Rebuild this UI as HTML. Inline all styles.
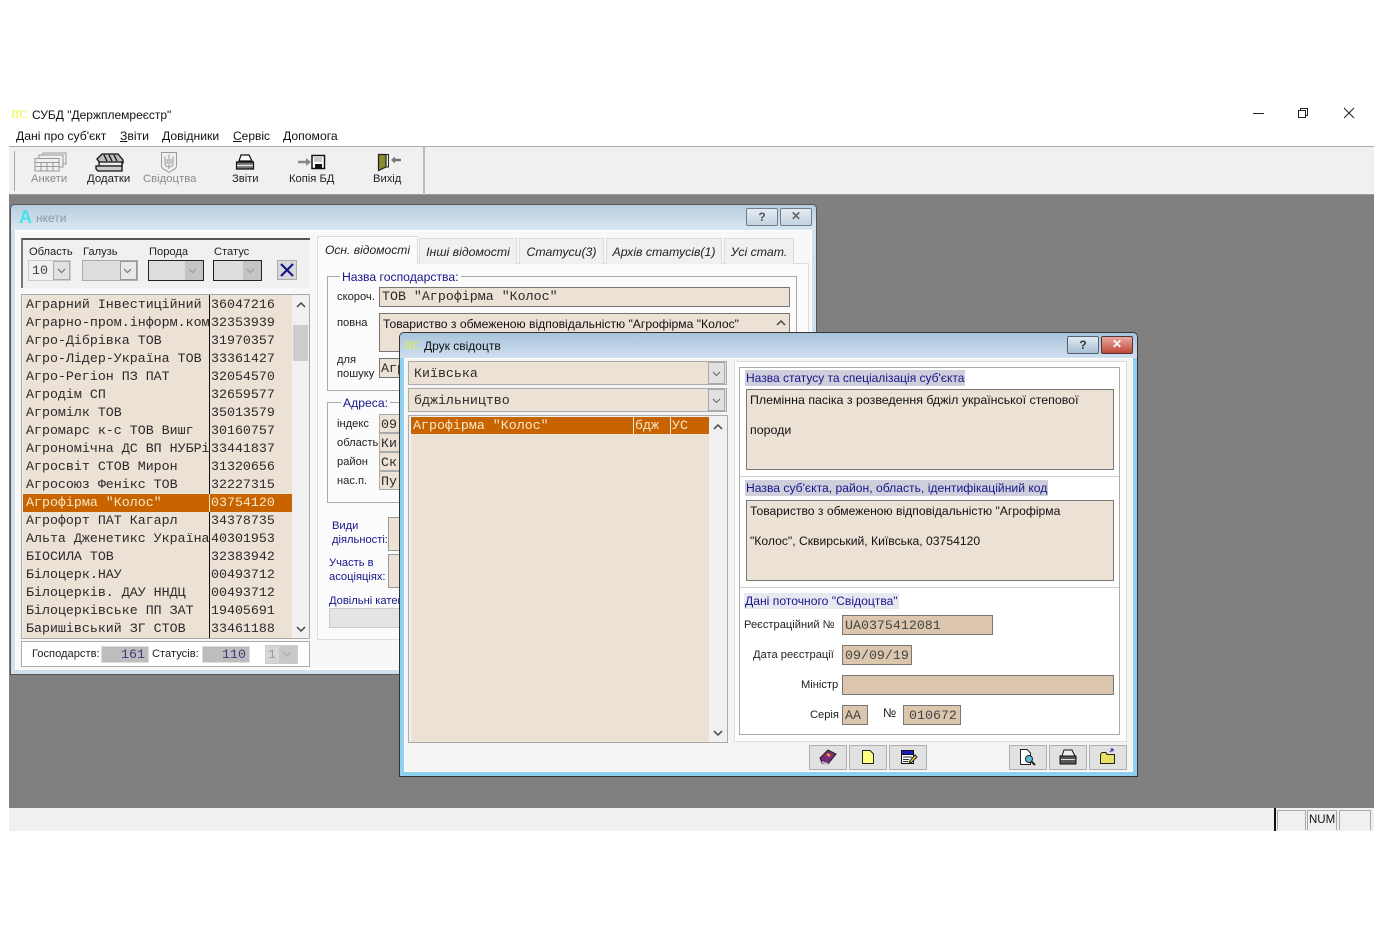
<!DOCTYPE html>
<html><head><meta charset="utf-8">
<style>
html,body{margin:0;padding:0;background:#fff}
#r{position:relative;width:1380px;height:943px;overflow:hidden;background:#fff;font-family:"Liberation Sans",sans-serif;font-size:12px;color:#111}
#r div,#r svg{position:absolute}
.t{white-space:nowrap;line-height:14px}
.s{font-size:11.15px;line-height:13px;white-space:nowrap;color:#222;margin-top:1px}
.m{font-family:"Liberation Mono",monospace;font-size:13.3px;line-height:16px;white-space:nowrap;color:#2a2a2a;margin-top:1px}
.b{color:#16168c}
.f{background:#ebe1d5;border:1px solid #777;box-sizing:border-box}
.tan{background:#dcc7ae;border:1px solid #777;box-sizing:border-box}
.g{border:1px solid #aaa;box-sizing:border-box}
.tab{background:#f0f0f0;border:1px solid #ddd;border-bottom:0;box-sizing:border-box;font-style:italic;text-align:center;line-height:27px;font-size:12.3px;color:#222;white-space:nowrap}
.btn{background:#e1e1e1;border:1px solid #adadad;box-sizing:border-box;width:38px;height:25px}
u{text-decoration:underline}
</style></head><body><div id="r">

<!-- app frame -->
<div style="left:9px;top:146px;width:1365px;height:49px;background:#f0f0f0;border-top:1px solid #aaa;border-bottom:1px solid #999;box-sizing:border-box"></div>
<div style="left:423px;top:146px;width:2px;height:49px;background:#bbb"></div>
<div style="left:14px;top:151px;width:1px;height:40px;background:#aaa"></div>
<div style="left:9px;top:195px;width:1365px;height:613px;background:#808080"></div>
<div style="left:9px;top:808px;width:1365px;height:23px;background:#f0f0f0"></div>

<!-- title -->
<div class="t" style="left:11px;top:107px;font-family:'Liberation Serif',serif;font-size:12px;letter-spacing:-1.5px;color:#f2f240">ΙΤC</div>
<div class="t" style="left:32px;top:108px;font-size:12px">СУБД "Держплемреєстр"</div>
<div class="t" style="left:16px;top:129px;font-size:12.2px"><u>Д</u>ані про суб'єкт</div>
<div class="t" style="left:120px;top:129px;font-size:12.2px"><u>З</u>віти</div>
<div class="t" style="left:162px;top:129px;font-size:12.2px"><u>Д</u>овідники</div>
<div class="t" style="left:233px;top:129px;font-size:12px"><u>С</u>ервіс</div>
<div class="t" style="left:283px;top:129px;font-size:12.2px"><u>Д</u>опомога</div>

<!-- window controls -->
<svg style="left:1250px;top:105px" width="110" height="16" fill="none" stroke="#222" stroke-width="1">
<path d="M3 8.500H14"/>
<rect x="48.500" y="5.500" width="7" height="7"/><path d="M50.500 5.500V3.500H57.500V10.500H55.500"/>
<path d="M94 3L104 13M104 3L94 13"/>
</svg>

<!-- toolbar -->
<svg style="left:30px;top:152px" width="40" height="20" fill="none" stroke="#999" stroke-width="1">
<path d="M5 6.500H29V19H5ZM5 10.500H29M5 14.500H29M11 10V19M17 10V19M23 10V19M9 6V3H33V15H29M13 3V1H36V12H33"/>
</svg>
<svg style="left:95px;top:153px" width="30" height="20" fill="none" stroke="#111" stroke-width="1.300">
<path fill="#bbb" d="M2 6L7 1H23L28 7V10H5Z"/><path d="M9 2L12 8M14 2L17 8M19 2L22 8"/>
<path fill="#eee" d="M4 9H27V13H4Z"/><path fill="#ccc" d="M1 13H27V18H3L1 16Z"/>
</svg>
<svg style="left:159px;top:152px" width="20" height="22" fill="none" stroke="#9a9a9a" stroke-width="1">
<path d="M2.500 .5H17.500V14C17.500 17 13 18 10 20.500C7 18 2.500 17 2.500 14Z"/><path d="M10 2.500V17M6 4.500V12C6 14.500 8 14.500 10 15C12 14.500 14 14.500 14 12V4.500M8 7V12M12 7V12"/>
</svg>
<svg style="left:235px;top:154px" width="20" height="17" fill="none" stroke="#111" stroke-width="1.200">
<path fill="#fff" d="M6 1H14L17 7H4Z"/><path fill="#777" d="M1.500 8H18.500V15H1.500Z"/><path d="M2 11.500H18" stroke="#eee"/>
</svg>
<svg style="left:297px;top:154px" width="30" height="16" fill="none">
<path d="M1 8H10" stroke="#888" stroke-width="2.500"/><path d="M9 4L14 8L9 12Z" fill="#888"/>
<rect x="15" y="1.500" width="12.500" height="13" fill="#fff" stroke="#111" stroke-width="1.500"/><rect x="17" y="2" width="8" height="6" fill="#ccc"/><rect x="18" y="10" width="7" height="4" fill="#111"/>
</svg>
<svg style="left:377px;top:153px" width="26" height="20" fill="none">
<path d="M1.500 1.500H9V14L1.500 17.500Z" fill="#8b8b2c" stroke="#222" stroke-width="1.200"/><path d="M9 1.500H11.500V14H9" stroke="#222"/>
<path d="M14 7L18 3.500V10.500Z" fill="#777"/><path d="M17 7H24" stroke="#777" stroke-width="2.500"/>
</svg>
<div class="s" style="left:31px;top:172px;color:#8a8a8a;font-size:11.3px">Анкети</div>
<div class="s" style="left:87px;top:172px;font-size:11.4px">Додатки</div>
<div class="s" style="left:143px;top:172px;color:#8a8a8a;font-size:11.3px">Свідоцтва</div>
<div class="s" style="left:232px;top:172px;font-size:11.2px">Звіти</div>
<div class="s" style="left:289px;top:172px;font-size:11.2px">Копія БД</div>
<div class="s" style="left:373px;top:172px;font-size:11.2px">Вихід</div>

<!-- status -->
<div style="left:1274px;top:808px;width:2px;height:23px;background:#111"></div>
<div style="left:1277px;top:810px;width:29px;height:20px;border:1px solid #aaa;border-bottom:0;box-sizing:border-box"></div>
<div style="left:1307px;top:810px;width:30px;height:20px;border:1px solid #aaa;border-bottom:0;box-sizing:border-box"></div>
<div class="t" style="left:1309px;top:813px;font-size:11.5px">NUM</div>
<div style="left:1339px;top:810px;width:32px;height:20px;border:1px solid #aaa;border-bottom:0;box-sizing:border-box"></div>

<!-- Анкети window -->
<div style="left:10px;top:204px;width:807px;height:471px;background:#cfe0ee;border:1px solid #555;border-radius:5px 5px 0 0;box-sizing:border-box"></div>
<div style="left:11px;top:205px;width:805px;height:25px;background:linear-gradient(#b8cde0,#d9e6f1);border-radius:4px 4px 0 0"></div>
<div class="t" style="left:19px;top:210px;font-size:18px;font-weight:bold;color:#3fe5e5">A</div>
<div class="t" style="left:36px;top:211px;color:#8d9aa5;font-size:12px">нкети</div>
<div style="left:746px;top:208px;width:32px;height:18px;background:linear-gradient(#e4ecf3,#c4d3e0);border:1px solid #6f7f8d;border-radius:2px;box-sizing:border-box;text-align:center;line-height:16px;font-weight:bold;color:#555;font-size:12px">?</div>
<div style="left:780px;top:208px;width:32px;height:18px;background:linear-gradient(#e4ecf3,#c4d3e0);border:1px solid #6f7f8d;border-radius:2px;box-sizing:border-box;text-align:center;line-height:15px;font-weight:bold;color:#666;font-size:12px">✕</div>
<div style="left:15px;top:230px;width:797px;height:440px;background:#f8f8f8;border:1px solid #fff;box-sizing:border-box"></div>

<!-- filter panel -->
<div style="left:21px;top:238px;width:289px;height:50px;background:#f0f0f0;border-top:2px solid #555;border-left:2px solid #777;box-sizing:border-box"></div>
<div class="s" style="left:29px;top:245px">Область</div>
<div class="s" style="left:83px;top:245px">Галузь</div>
<div class="s" style="left:149px;top:245px">Порода</div>
<div class="s" style="left:214px;top:245px">Статус</div>
<div class="g" style="left:28px;top:260px;width:43px;height:21px;background:#f0f0f0;border-color:#ccc"></div>
<div class="m" style="left:32px;top:262px;color:#444">10</div>
<div style="left:53px;top:261px;width:17px;height:19px;background:#e1e1e1;border:1px solid #aaa;box-sizing:border-box"></div>
<div class="g" style="left:82px;top:260px;width:56px;height:21px;background:#ddd"></div>
<div style="left:120px;top:261px;width:17px;height:19px;background:#e8e8e8;border:1px solid #999;box-sizing:border-box"></div>
<div style="left:148px;top:260px;width:56px;height:21px;background:#ddd;border:1px solid #222;box-sizing:border-box"></div>
<div style="left:185px;top:261px;width:18px;height:19px;background:#c4c4c4"></div>
<div style="left:213px;top:260px;width:49px;height:21px;background:#ddd;border:1px solid #222;box-sizing:border-box"></div>
<div style="left:243px;top:261px;width:18px;height:19px;background:#c4c4c4"></div>
<svg style="left:277px;top:260px" width="20" height="20" fill="none"><rect x=".5" y=".5" width="19" height="19" fill="#d8d8d8" stroke="#aaa"/><path d="M4 4L16 16M16 4L4 16" stroke="#16168c" stroke-width="2.200"/></svg>
<svg style="left:53px;top:261px" width="210" height="19" fill="none" stroke="#666"><path d="M5 8L8.500 11.500L12 8M71 8L74.500 11.500L78 8"/><path d="M136 8L139.500 11.500L143 8M194 8L197.500 11.500L201 8" stroke="#999"/></svg>

<!-- list -->
<div style="left:21px;top:294px;width:289px;height:345px;background:#f0f0f0;border:1px solid #aaa;box-sizing:border-box"></div>
<div style="left:23px;top:295px;width:269px;height:343px;background:#ebe1d5"></div>
<div style="left:23px;top:494px;width:269px;height:18px;background:#c86400"></div>
<div style="left:209px;top:295px;width:1px;height:343px;background:#111"></div>
<div style="left:209px;top:494px;width:1px;height:18px;background:#f5e8d8"></div>
<div style="left:293px;top:325px;width:15px;height:36px;background:#cdcdcd"></div>
<svg style="left:294px;top:298px" width="14" height="336" fill="none" stroke="#444" stroke-width="1.500"><path d="M3 9L7 5L11 9M3 329L7 333L11 329"/></svg>
<div class="m" style="left:26px;top:295px;line-height:18px;width:183px;overflow:hidden">Аграрний Інвестиційний<br>Аграрно-пром.інформ.ком<br>Агро-Дібрівка ТОВ<br>Агро-Лідер-Україна ТОВ<br>Агро-Регіон ПЗ ПАТ<br>Агродім СП<br>Агромілк ТОВ<br>Агромарс к-с ТОВ Вишг<br>Агрономічна ДС ВП НУБРіП<br>Агросвіт СТОВ Мирон<br>Агросоюз Фенікс ТОВ<br><span style="color:#f8e8c8">Агрофірма "Колос"</span><br>Агрофорт ПАТ Кагарл<br>Альта Дженетикс Україна<br>БІОСИЛА ТОВ<br>Білоцерк.НАУ<br>Білоцерків. ДАУ ННДЦ<br>Білоцерківське ПП ЗАТ<br>Баришівський ЗГ СТОВ</div>
<div class="m" style="left:211px;top:295px;line-height:18px">36047216<br>32353939<br>31970357<br>33361427<br>32054570<br>32659577<br>35013579<br>30160757<br>33441837<br>31320656<br>32227315<br><span style="color:#f8e8c8">03754120</span><br>34378735<br>40301953<br>32383942<br>00493712<br>00493712<br>19405691<br>33461188</div>

<!-- footer -->
<div style="left:21px;top:641px;width:289px;height:26px;background:#fff;border:1px solid #aaa;box-sizing:border-box"></div>
<div class="s" style="left:32px;top:647px">Господарств:</div>
<div style="left:101px;top:646px;width:48px;height:17px;background:#bdbdbd;border:1px solid #ddd;box-sizing:border-box"></div>
<div class="m" style="left:121px;top:646px;color:#3c3c78">161</div>
<div class="s" style="left:152px;top:647px">Статусів:</div>
<div style="left:202px;top:646px;width:48px;height:17px;background:#bdbdbd;border:1px solid #ddd;box-sizing:border-box"></div>
<div class="m" style="left:222px;top:646px;color:#3c3c78">110</div>
<div style="left:265px;top:645px;width:33px;height:19px;background:#d6d6d6;border:1px solid #ccc;box-sizing:border-box"></div>
<div style="left:279px;top:646px;width:18px;height:17px;background:#c8c8c8"></div>
<svg style="left:281px;top:649px" width="12" height="10" fill="none" stroke="#aaa"><path d="M2 3L6 7L10 3"/></svg>
<div class="m" style="left:268px;top:646px;color:#999">1</div>

<!-- tabs -->
<div style="left:317px;top:263px;width:492px;height:377px;background:#fbfbfb;border:1px solid #ddd;box-sizing:border-box"></div>
<div class="tab" style="left:317px;top:236px;width:101px;height:29px;background:#fbfbfb;font-size:12.1px">Осн. відомості</div>
<div class="tab" style="left:419px;top:238px;width:98px;height:26px">Інші відомості</div>
<div class="tab" style="left:519px;top:238px;width:85px;height:26px">Статуси(3)</div>
<div class="tab" style="left:606px;top:238px;width:116px;height:26px">Архів статусів(1)</div>
<div class="tab" style="left:724px;top:238px;width:70px;height:26px">Усі стат.</div>

<div class="g" style="left:327px;top:276px;width:470px;height:115px"></div>
<div class="t b" style="left:340px;top:270px;background:#fbfbfb;padding:0 2px;font-size:12.2px">Назва господарства:</div>
<div class="s" style="left:337px;top:290px">скороч.</div>
<div class="f" style="left:379px;top:287px;width:411px;height:20px"></div>
<div class="m" style="left:382px;top:288px">ТОВ "Агрофірма "Колос"</div>
<div class="s" style="left:337px;top:316px">повна</div>
<div class="f" style="left:379px;top:313px;width:411px;height:39px"></div>
<div class="t" style="left:383px;top:317px;font-size:12.15px">Товариство з обмеженою відповідальністю "Агрофірма "Колос"</div>
<svg style="left:775px;top:317px" width="12" height="12" fill="none" stroke="#444" stroke-width="1.500"><path d="M2 8L6 4L10 8"/></svg>
<div class="s" style="left:337px;top:353px">для</div>
<div class="s" style="left:337px;top:367px">пошуку</div>
<div class="f" style="left:379px;top:358px;width:30px;height:20px"></div>
<div class="m" style="left:381px;top:360px">Агр</div>

<div class="g" style="left:327px;top:402px;width:80px;height:101px;border-right:0"></div>
<div class="t b" style="left:341px;top:396px;background:#fbfbfb;padding:0 2px;font-size:12.2px">Адреса:</div>
<div class="s" style="left:337px;top:417px">індекс</div>
<div class="s" style="left:337px;top:436px">область</div>
<div class="s" style="left:337px;top:455px">район</div>
<div class="s" style="left:337px;top:474px">нас.п.</div>
<div class="f" style="left:379px;top:414px;width:30px;height:19px;border-color:#aaa"></div>
<div class="f" style="left:379px;top:433px;width:30px;height:19px;border-color:#aaa"></div>
<div class="f" style="left:379px;top:452px;width:30px;height:19px;border-color:#aaa"></div>
<div class="f" style="left:379px;top:471px;width:30px;height:19px;border-color:#aaa"></div>
<div class="m" style="left:381px;top:416px">09</div>
<div class="m" style="left:381px;top:435px">Ки</div>
<div class="m" style="left:381px;top:454px">Ск</div>
<div class="m" style="left:381px;top:473px">Пу</div>

<div class="s b" style="left:332px;top:519px">Види</div>
<div class="s b" style="left:332px;top:533px">діяльності:</div>
<div class="f" style="left:388px;top:517px;width:20px;height:34px;border-color:#999"></div>
<div class="s b" style="left:329px;top:556px">Участь в</div>
<div class="s b" style="left:329px;top:570px">асоціяціях:</div>
<div class="f" style="left:388px;top:554px;width:20px;height:34px;border-color:#999"></div>
<div class="s b" style="left:329px;top:594px;width:71px;overflow:hidden">Довільні категорії</div>
<div style="left:329px;top:608px;width:75px;height:20px;background:#e4e4e4;border:1px solid #ccc;box-sizing:border-box"></div>

<!-- Druk window -->
<div style="left:399px;top:332px;width:739px;height:445px;background:#8fd0ee;border:1px solid #333;border-radius:5px 5px 0 0;box-sizing:border-box"></div>
<div style="left:400px;top:333px;width:737px;height:25px;background:linear-gradient(#a8c4dc,#cfdfed);border-radius:4px 4px 0 0"></div>
<div style="left:404px;top:358px;width:729px;height:414px;background:#f4f4f4;border:1px solid #fff;box-sizing:border-box"></div>
<div class="t" style="left:404px;top:338px;font-family:'Liberation Serif',serif;font-size:12px;letter-spacing:-1.5px;color:#e8f040">ΙΤC</div>
<div class="t" style="left:424px;top:339px;font-size:12px">Друк свідоцтв</div>
<div style="left:1067px;top:336px;width:32px;height:18px;background:linear-gradient(#dfe9f2,#a9c0d4);border:1px solid #54636f;border-radius:2px;box-sizing:border-box;text-align:center;line-height:16px;font-weight:bold;color:#333;font-size:12px">?</div>
<div style="left:1101px;top:336px;width:32px;height:18px;background:linear-gradient(#e8a8a0,#c04838);border:1px solid #54343a;border-radius:2px;box-sizing:border-box;text-align:center;line-height:15px;font-weight:bold;color:#fff;font-size:12px">✕</div>

<!-- left column -->
<div style="left:408px;top:361px;width:319px;height:24px;background:#ebe1d5;border:1px solid #aaa;box-sizing:border-box"></div>
<div style="left:708px;top:362px;width:17px;height:22px;background:#e1e1e1;border:1px solid #aaa;box-sizing:border-box"></div>
<div class="m" style="left:414px;top:365px">Київська</div>
<div style="left:408px;top:388px;width:319px;height:24px;background:#ebe1d5;border:1px solid #aaa;box-sizing:border-box"></div>
<div style="left:708px;top:389px;width:17px;height:22px;background:#e1e1e1;border:1px solid #aaa;box-sizing:border-box"></div>
<div class="m" style="left:414px;top:392px">бджільництво</div>
<svg style="left:708px;top:362px" width="17" height="48" fill="none" stroke="#666"><path d="M5 10L8.500 13.500L12 10M5 37L8.500 40.500L12 37"/></svg>
<div style="left:408px;top:415px;width:320px;height:328px;background:#f0f0f0;border:1px solid #aaa;box-sizing:border-box"></div>
<div style="left:411px;top:417px;width:298px;height:325px;background:#ebe1d5"></div>
<div style="left:411px;top:417px;width:298px;height:17px;background:#c86400"></div>
<div style="left:633px;top:417px;width:1px;height:17px;background:#f5e8d8"></div>
<div style="left:670px;top:417px;width:1px;height:17px;background:#f5e8d8"></div>
<div class="m" style="left:413px;top:417px;color:#f8e8c8">Агрофірма "Колос"</div>
<div class="m" style="left:635px;top:417px;color:#f8e8c8">бдж</div>
<div class="m" style="left:672px;top:417px;color:#f8e8c8">УС</div>
<svg style="left:711px;top:420px" width="14" height="318" fill="none" stroke="#444" stroke-width="1.500"><path d="M3 9L7 5L11 9M3 311L7 315L11 311"/></svg>

<!-- right column -->
<div style="left:734px;top:361px;width:393px;height:381px;background:#fff;border:1px solid #ddd;box-sizing:border-box"></div>
<div class="g" style="left:739px;top:367px;width:381px;height:368px;background:#fff"></div>
<div style="left:740px;top:476px;width:379px;height:1px;background:#ccc"></div>
<div style="left:740px;top:587px;width:379px;height:1px;background:#ccc"></div>
<div class="t b" style="left:745px;top:370px;background:#cfcfdc;padding:0 1px;height:16px;line-height:16px">Назва статусу та спеціалізація суб'єкта</div>
<div class="f" style="left:746px;top:389px;width:368px;height:81px"></div>
<div class="t" style="left:750px;top:385px;font-size:12.4px;line-height:30px">Племінна пасіка з розведення бджіл української степової<br>породи</div>
<div class="t b" style="left:745px;top:480px;background:#cfcfdc;padding:0 1px;height:16px;line-height:16px;font-size:12.15px">Назва суб'єкта, район, область, ідентифікаційний код</div>
<div class="f" style="left:746px;top:500px;width:368px;height:81px"></div>
<div class="t" style="left:750px;top:496px;font-size:12.15px;line-height:30px">Товариство з обмеженою відповідальністю "Агрофірма<br>"Колос", Сквирський, Київська, 03754120</div>
<div class="t b" style="left:744px;top:593px;background:#e8e8f0;padding:0 1px;height:16px;line-height:16px;font-size:12.15px">Дані поточного "Свідоцтва"</div>

<div class="s" style="left:744px;top:618px">Реєстраційний №</div>
<div class="tan" style="left:842px;top:615px;width:151px;height:20px"></div>
<div class="m" style="left:845px;top:617px;color:#444">UA0375412081</div>
<div class="s" style="left:753px;top:648px">Дата реєстрації</div>
<div class="tan" style="left:842px;top:645px;width:70px;height:20px"></div>
<div class="m" style="left:845px;top:647px;color:#444">09/09/19</div>
<div class="s" style="left:801px;top:678px">Міністр</div>
<div class="tan" style="left:842px;top:675px;width:272px;height:20px"></div>
<div class="s" style="left:810px;top:708px">Серія</div>
<div class="tan" style="left:842px;top:705px;width:26px;height:20px"></div>
<div class="m" style="left:845px;top:707px;color:#444">AA</div>
<div class="s" style="left:883px;top:706px;font-size:12.5px">№</div>
<div class="tan" style="left:903px;top:705px;width:58px;height:20px"></div>
<div class="m" style="left:909px;top:707px;color:#444">010672</div>

<!-- bottom buttons -->
<div class="btn" style="left:809px;top:745px"></div>
<div class="btn" style="left:849px;top:745px"></div>
<div class="btn" style="left:889px;top:745px"></div>
<div class="btn" style="left:1009px;top:745px"></div>
<div class="btn" style="left:1049px;top:745px"></div>
<div class="btn" style="left:1089px;top:745px"></div>
<svg style="left:819px;top:749px" width="18" height="17"><path d="M1 9L9 1L17 5L9 15L3 14Z" fill="#7a2a7a" stroke="#222"/><path d="M8 5L11 7" stroke="#f0a020" stroke-width="2.500"/><path d="M3 13L9 15" stroke="#ccc" stroke-width="1.500"/></svg>
<svg style="left:861px;top:750px" width="14" height="15"><path d="M1.500 .5H9L12.500 4V13.500H1.500Z" fill="#ffff80" stroke="#222"/></svg>
<svg style="left:900px;top:749px" width="18" height="17" fill="none"><rect x="1.500" y="1.500" width="12" height="4" fill="#1c1cc0" stroke="#111"/><rect x="1.500" y="5.500" width="12" height="9" fill="#fff" stroke="#111"/><path d="M3 8H12M3 10.500H9M3 12.500H8" stroke="#333"/><path d="M9 13L15 6L17 8L11 14Z" fill="#e8d840" stroke="#222"/></svg>
<svg style="left:1019px;top:749px" width="18" height="17" fill="none"><path d="M1.500 .5H8L11.500 4V15.500H1.500Z" fill="#fff" stroke="#222"/><circle cx="10" cy="10" r="3.500" fill="#58c0d0" stroke="#222"/><path d="M12.500 12.500L16 16" stroke="#222" stroke-width="2"/></svg>
<svg style="left:1059px;top:749px" width="18" height="17"><path d="M5 1H13L16 7H3Z" fill="#eee" stroke="#111"/><path d="M1 7H17V15H1Z" fill="#555" stroke="#111"/><path d="M2 10.500H16" stroke="#ddd"/></svg>
<svg style="left:1099px;top:748px" width="18" height="17" fill="none"><path d="M1.500 15.500V6.500L3 4.500H7L8 6.500H15.500V15.500Z" fill="#e8e060" stroke="#222"/><path d="M14 1L11.500 1M14 1V3.500M14 1L11 4" stroke="#2020a0"/></svg>

</div></body></html>
